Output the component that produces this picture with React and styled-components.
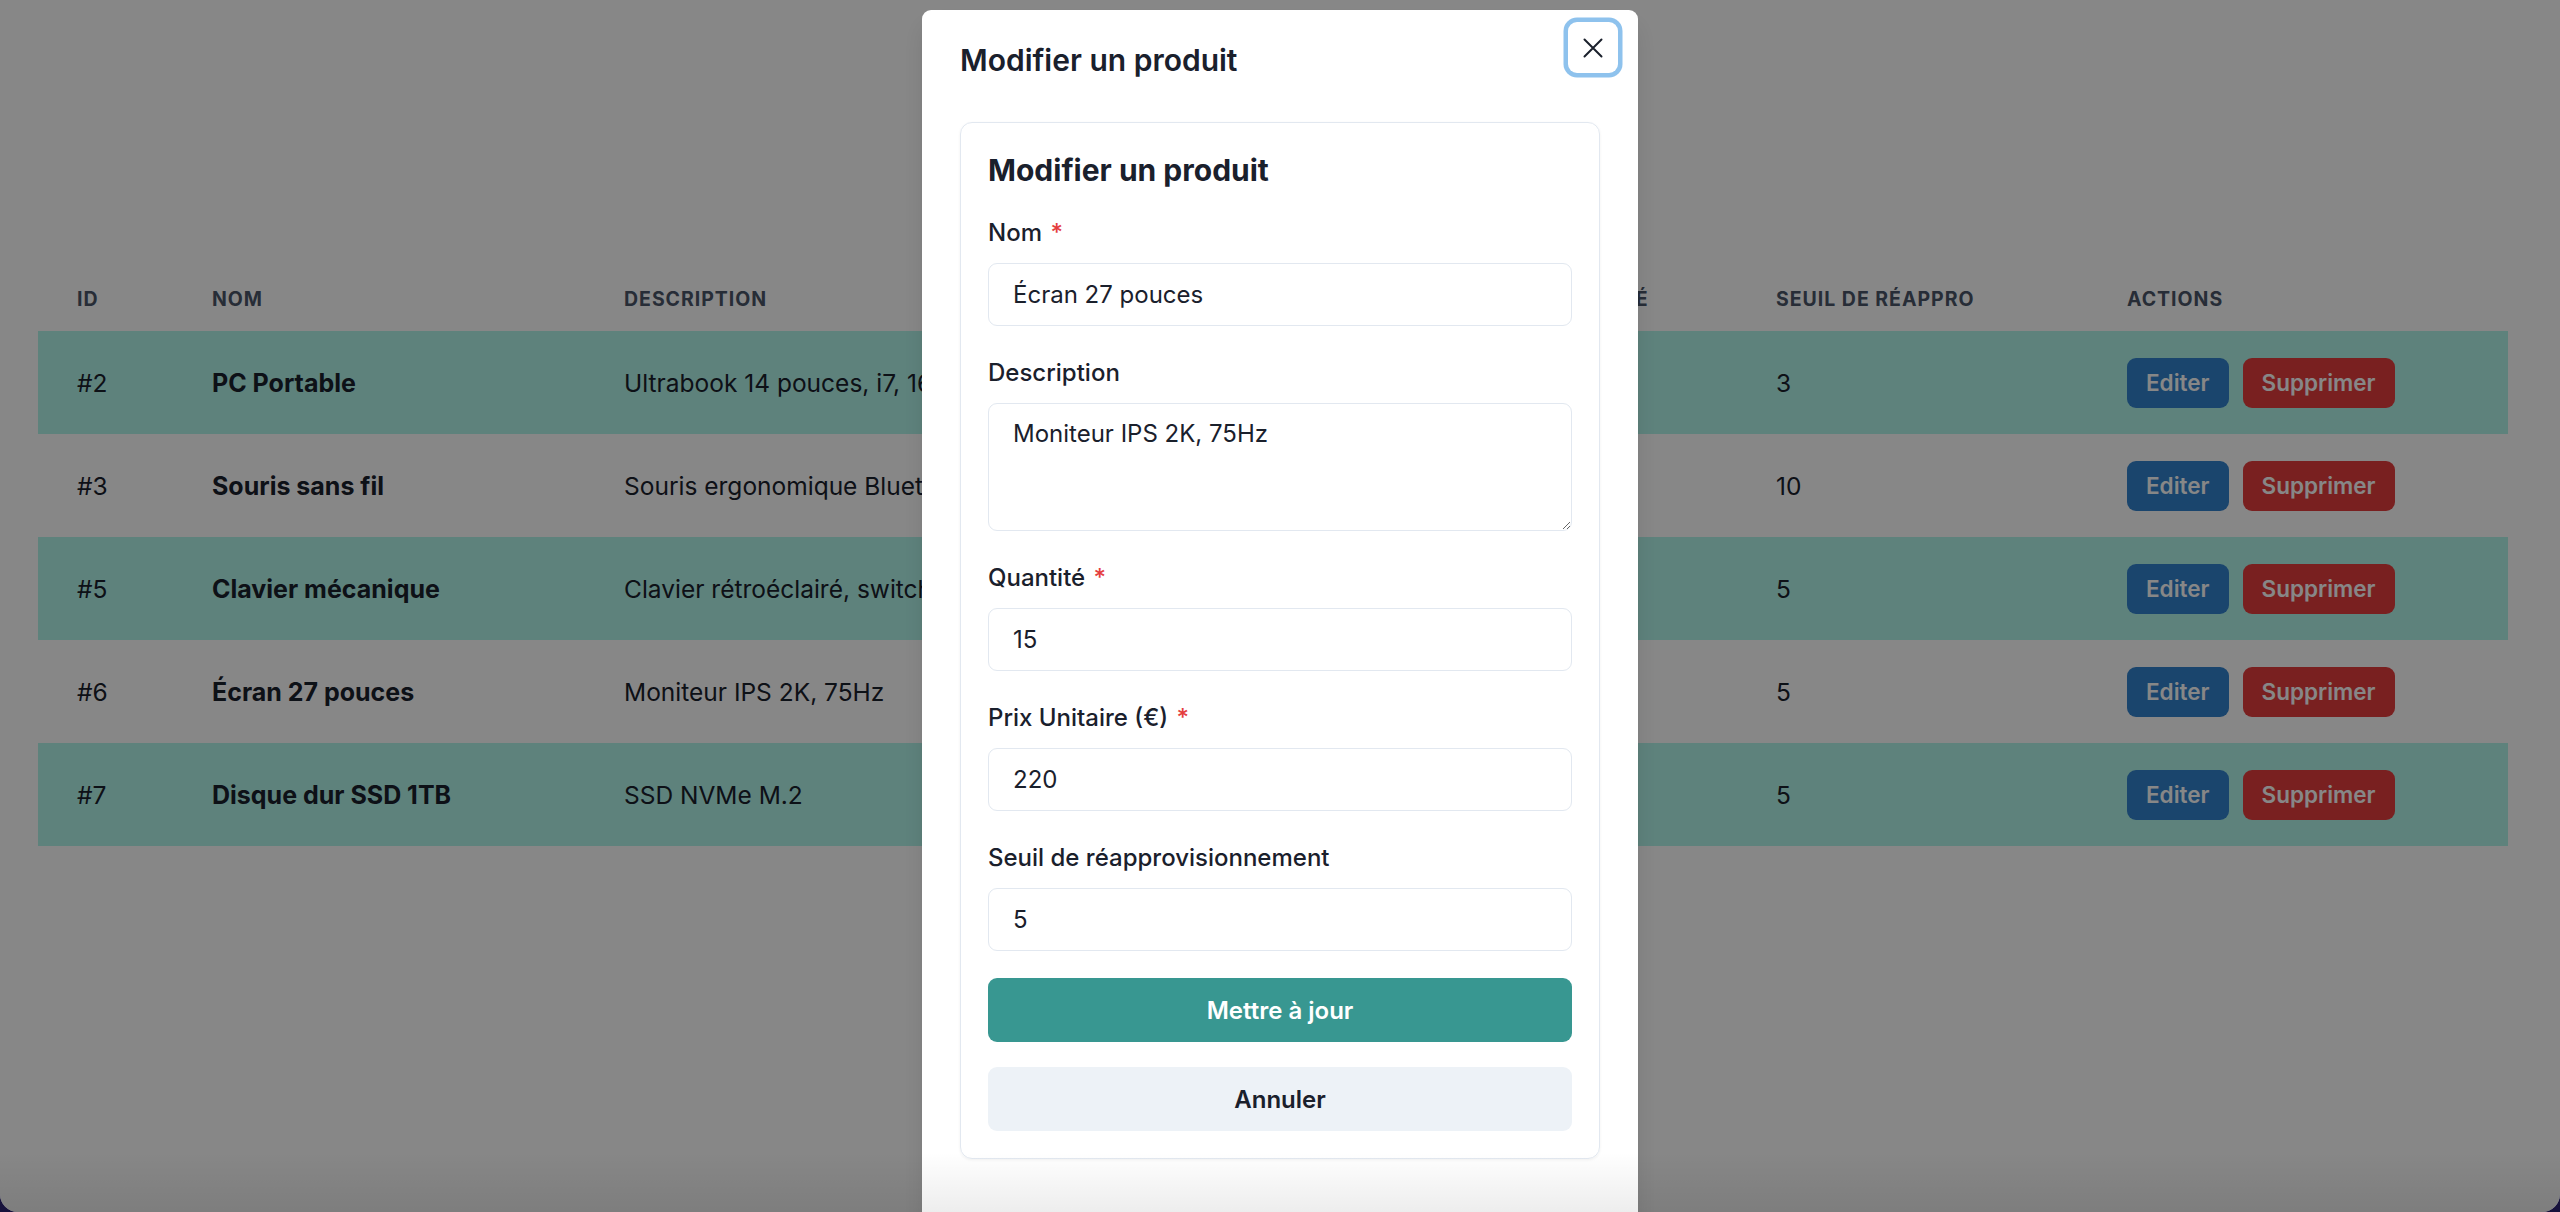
import styled, { createGlobalStyle } from 'styled-components';

const GlobalStyle = createGlobalStyle`
  html, body {
    margin: 0;
    padding: 0;
    background: #17123c;
    overflow: hidden;
  }
  * { box-sizing: border-box; }
  body {
    font-family: Inter, "Noto Sans", "Liberation Sans", sans-serif;
    color: #1A202C;
  }
`;

const products = [
  { id: 2, name: 'PC Portable', description: 'Ultrabook 14 pouces, i7, 16 Go', price: '1200 €', quantity: 8, threshold: 3, striped: true },
  { id: 3, name: 'Souris sans fil', description: 'Souris ergonomique Bluetooth', price: '35 €', quantity: 40, threshold: 10 },
  { id: 5, name: 'Clavier mécanique', description: 'Clavier rétroéclairé, switches', price: '90 €', quantity: 12, threshold: 5, striped: true },
  { id: 6, name: 'Écran 27 pouces', description: 'Moniteur IPS 2K, 75Hz', price: '220 €', quantity: 15, threshold: 5 },
  { id: 7, name: 'Disque dur SSD 1TB', description: 'SSD NVMe M.2', price: '110 €', quantity: 20, threshold: 5, striped: true },
];

const columns = [
  { label: 'ID', width: 135 },
  { label: 'Nom', width: 412 },
  { label: 'Description', width: 645 },
  { label: 'Prix unitaire', width: 270 },
  { label: 'Quantité', width: 237 },
  { label: 'Seuil de réappro', width: 351 },
  { label: 'Actions', width: 420 },
];

export default function App() {
  return (
    <>
      <GlobalStyle />
      <Screen>
        <Page>
          <Table>
            <colgroup>
              {columns.map(c => <col key={c.label} style={{ width: c.width }} />)}
            </colgroup>
            <thead>
              <tr>
                {columns.map(c => <Th key={c.label}>{c.label}</Th>)}
              </tr>
            </thead>
            <tbody>
              {products.map(p => (
                <Row key={p.id} $striped={p.striped}>
                  <Td>#{p.id}</Td>
                  <Td $bold>{p.name}</Td>
                  <Td>{p.description}</Td>
                  <Td>{p.price}</Td>
                  <Td>{p.quantity}</Td>
                  <Td>{p.threshold}</Td>
                  <Td>
                    <Actions>
                      <SmallButton $tone="blue">Editer</SmallButton>
                      <SmallButton $tone="red">Supprimer</SmallButton>
                    </Actions>
                  </Td>
                </Row>
              ))}
            </tbody>
          </Table>
        </Page>

        <Overlay />

        <ModalWrap>
          <Modal>
            <ModalHeader>Modifier un produit</ModalHeader>
            <CloseButton aria-label="Fermer">
              <svg width="20" height="20" viewBox="0 0 20 20">
                <path d="M1.5 1.5 L18.5 18.5 M18.5 1.5 L1.5 18.5" stroke="#1A202C" strokeWidth="2" strokeLinecap="round" fill="none" />
              </svg>
            </CloseButton>
            <ModalBody>
              <Card>
                <CardTitle>Modifier un produit</CardTitle>
                <Form onSubmit={e => e.preventDefault()}>
                  <Field>
                    <Label>Nom <Required>*</Required></Label>
                    <Input defaultValue="Écran 27 pouces" />
                  </Field>
                  <Field>
                    <Label>Description</Label>
                    <TextArea defaultValue="Moniteur IPS 2K, 75Hz" />
                  </Field>
                  <Field>
                    <Label>Quantité <Required>*</Required></Label>
                    <Input defaultValue="15" />
                  </Field>
                  <Field>
                    <Label>Prix Unitaire (€) <Required>*</Required></Label>
                    <Input defaultValue="220" />
                  </Field>
                  <Field>
                    <Label>Seuil de réapprovisionnement</Label>
                    <Input defaultValue="5" />
                  </Field>
                  <Buttons>
                    <WideButton type="submit" $primary>Mettre à jour</WideButton>
                    <WideButton type="button">Annuler</WideButton>
                  </Buttons>
                </Form>
              </Card>
            </ModalBody>
          </Modal>
        </ModalWrap>

        <Vignette />
      </Screen>
    </>
  );
}

const Screen = styled.div`
  position: relative;
  width: 2560px;
  height: 1212px;
  overflow: hidden;
  background: #ffffff;
  border-radius: 0 0 18px 18px;
`;

const Page = styled.main`
  padding: 268px 52px 0 38px;
`;

const Table = styled.table`
  width: 100%;
  table-layout: fixed;
  border-collapse: collapse;
`;

const Th = styled.th`
  text-align: left;
  padding: 18px 39px;
  font-size: 19.5px;
  line-height: 27px;
  font-weight: 700;
  text-transform: uppercase;
  letter-spacing: 0.05em;
  color: #4A5568;
  white-space: nowrap;
`;

const Row = styled.tr`
  height: 103px;
  background: ${p => (p.$striped ? '#B2F5EA' : 'transparent')};
`;

const Td = styled.td`
  padding: 0 39px;
  font-size: ${p => (p.$bold ? '25px' : '24.5px')};
  font-weight: ${p => (p.$bold ? 700 : 400)};
  color: #1A202C;
  white-space: nowrap;
  vertical-align: middle;
`;

const Actions = styled.div`
  display: flex;
  gap: 14px;
`;

const SmallButton = styled.button`
  height: 50px;
  padding: 0 19px;
  border: none;
  border-radius: 9px;
  font-family: inherit;
  font-size: 22.5px;
  font-weight: 600;
  color: #ffffff;
  background: ${p => (p.$tone === 'red' ? '#E53E3E' : '#3182CE')};
`;

const Overlay = styled.div`
  position: absolute;
  inset: 0;
  background: rgba(0, 0, 0, 0.47);
`;

const ModalWrap = styled.div`
  position: absolute;
  inset: 0;
  display: flex;
  justify-content: center;
  align-items: flex-start;
  padding-top: 10px;
`;

const Modal = styled.section`
  position: relative;
  width: 716px;
  background: #ffffff;
  border-radius: 9px;
  padding-bottom: 80px;
  box-shadow: 0 15px 22px -5px rgba(0, 0, 0, 0.15), 0 6px 9px -5px rgba(0, 0, 0, 0.06);
`;

const ModalHeader = styled.header`
  padding: 32px 38px;
  font-size: 30px;
  line-height: 36px;
  font-weight: 600;
  color: #1A202C;
`;

const CloseButton = styled.button`
  position: absolute;
  top: 12px;
  right: 20px;
  width: 50px;
  height: 51px;
  display: flex;
  align-items: center;
  justify-content: center;
  border: none;
  border-radius: 9px;
  background: #ffffff;
  box-shadow: 0 0 0 4.5px rgba(66, 153, 225, 0.6);
  padding: 0;
`;

const ModalBody = styled.div`
  padding: 12px 38px 0;
`;

const Card = styled.div`
  border: 1.5px solid #E2E8F0;
  border-radius: 12px;
  padding: 29px 27px 27px;
  box-shadow: 0 1px 3px rgba(0, 0, 0, 0.06);
`;

const CardTitle = styled.h2`
  margin: 0 0 27px;
  font-size: 30px;
  line-height: 36px;
  font-weight: 700;
  color: #1A202C;
`;

const Form = styled.form`
  display: flex;
  flex-direction: column;
  gap: 29px;
`;

const Field = styled.div`
  display: flex;
  flex-direction: column;
`;

const Label = styled.label`
  margin-bottom: 12px;
  font-size: 24px;
  line-height: 36px;
  font-weight: 500;
  color: #1A202C;
`;

const Required = styled.span`
  margin-left: 2px;
  color: #E53E3E;
`;

const Input = styled.input`
  height: 63px;
  width: 100%;
  padding: 0 24px;
  border: 1.5px solid #E2E8F0;
  border-radius: 9px;
  font-family: inherit;
  font-size: 24px;
  color: #1A202C;
  background: #ffffff;
  outline: none;
`;

const TextArea = styled.textarea`
  height: 128px;
  width: 100%;
  padding: 12px 24px;
  border: 1.5px solid #E2E8F0;
  border-radius: 9px;
  font-family: inherit;
  font-size: 24px;
  line-height: 36px;
  color: #1A202C;
  resize: vertical;
  outline: none;
`;

const Buttons = styled.div`
  display: flex;
  flex-direction: column;
  gap: 25px;
  margin-top: -2px;
`;

const WideButton = styled.button`
  height: 64px;
  width: 100%;
  border: none;
  border-radius: 9px;
  font-family: inherit;
  font-size: 24px;
  font-weight: 600;
  color: ${p => (p.$primary ? '#ffffff' : '#1A202C')};
  background: ${p => (p.$primary ? '#389791' : '#EDF2F7')};
`;

const Vignette = styled.div`
  position: absolute;
  left: 0;
  right: 0;
  bottom: 0;
  height: 60px;
  pointer-events: none;
  background: linear-gradient(to bottom, rgba(0, 0, 0, 0), rgba(0, 0, 0, 0.07));
`;
